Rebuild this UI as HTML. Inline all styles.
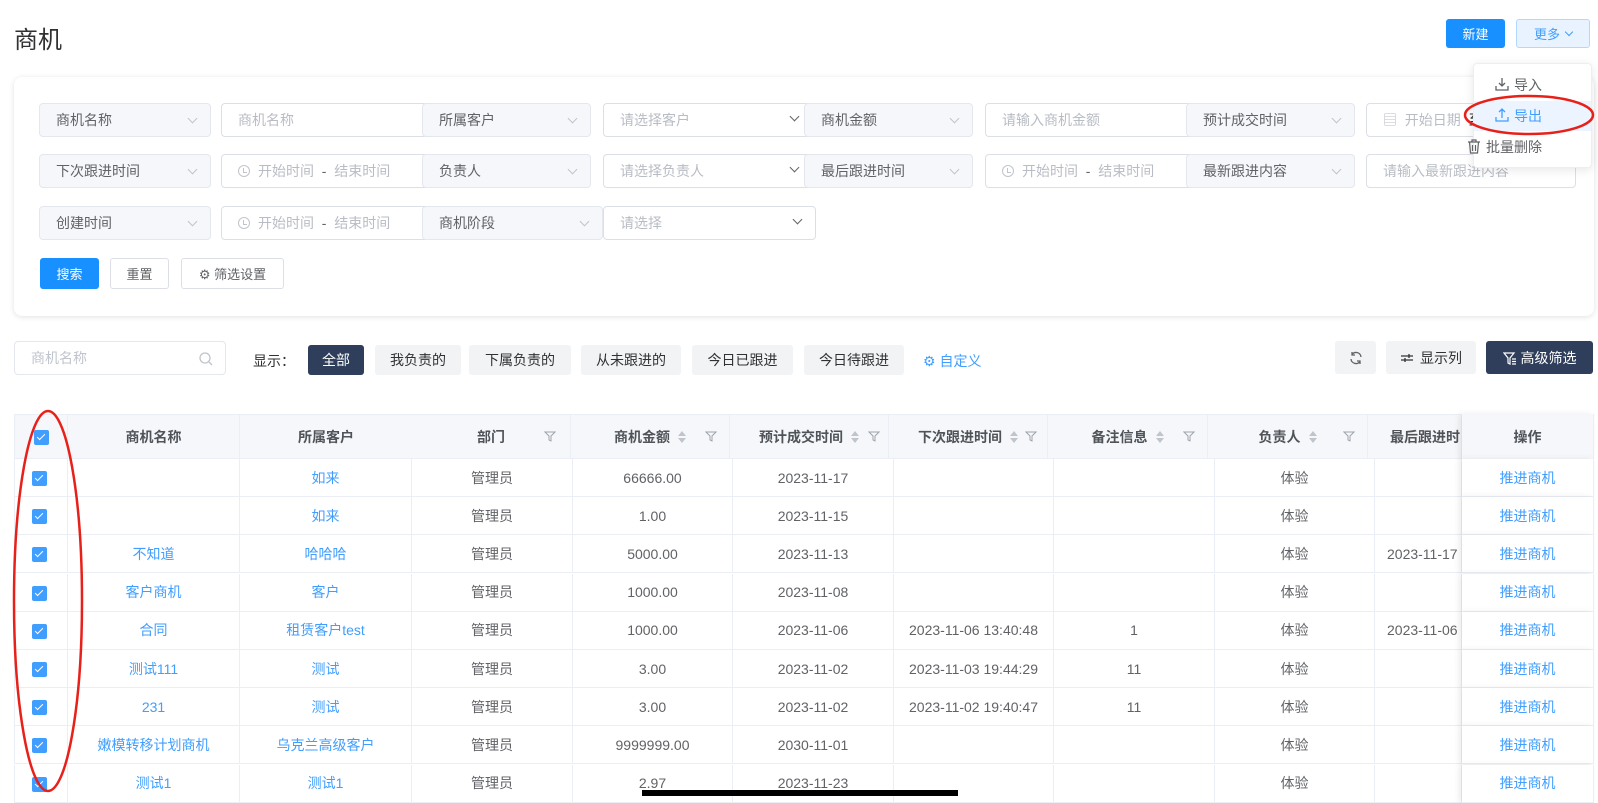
<!DOCTYPE html>
<html><head><meta charset="utf-8"><style>
*{box-sizing:border-box;margin:0;padding:0}
body{width:1598px;height:796px;overflow:hidden;background:#fff;font-family:"Liberation Sans","Noto Sans CJK SC",sans-serif;font-size:14px;color:#303133;position:relative}
.a{position:absolute}
.lbl{position:absolute;background:#f5f7fa;border:1px solid #e4e7ed;border-radius:4px;color:#606266;padding-left:16px;display:flex;align-items:center;height:34px}
.inp{position:absolute;background:#fff;border:1px solid #dcdfe6;border-radius:4px;color:#b8bcc4;padding-left:16px;display:flex;align-items:center;height:34px}
.chev{position:absolute;right:14px;top:11px;width:7px;height:7px;border-right:1px solid #c0c4cc;border-bottom:1px solid #c0c4cc;transform:rotate(45deg)}
.chev.d{border-color:#606266;top:9px}
.btn{position:absolute;display:flex;align-items:center;justify-content:center;border-radius:3px;font-size:13px}
.tab{position:absolute;top:345px;height:30px;background:#f2f3f5;border-radius:3px;display:flex;align-items:center;justify-content:center;color:#303133}
.clk{display:inline-block;width:12px;height:12px;border:1px solid #c0c4cc;border-radius:50%;margin-right:8px;position:relative}
.clk:after{content:"";position:absolute;left:4px;top:2px;width:3px;height:4px;border-left:1px solid #c0c4cc;border-bottom:1px solid #c0c4cc}
.th{position:absolute;top:414px;height:45px;display:flex;align-items:center;justify-content:center;font-weight:bold;color:#505459;font-size:14px;border-right:1px solid #ebeef5}
.td{position:absolute;height:38px;display:flex;align-items:center;justify-content:center;color:#606266;border-right:1px solid #ebeef5;border-bottom:1px solid #ebeef5}
.lk{color:#409eff}
.cb{position:absolute;width:15px;height:15px;background:#409eff;border-radius:2px}
.cb:after{content:"";position:absolute;left:5px;top:2px;width:3px;height:7px;border-right:1.5px solid #fff;border-bottom:1.5px solid #fff;transform:rotate(45deg)}
.sort{display:inline-block;margin-left:8px;width:8px;position:relative;height:14px}
.sort:before{content:"";position:absolute;top:1px;left:0;border:4px solid transparent;border-bottom:5px solid #c0c4cc;border-top:0}
.sort:after{content:"";position:absolute;bottom:1px;left:0;border:4px solid transparent;border-top:5px solid #c0c4cc;border-bottom:0}
.flt{position:absolute;width:12px;height:11px}
</style></head><body>

<div class="a" style="left:14px;top:20px;font-size:24px;color:#303133">商机</div>
<div class="btn" style="left:1446px;top:19px;width:59px;height:29px;background:#1890ff;color:#fff">新建</div>
<div class="btn" style="left:1516px;top:19px;width:74px;height:29px;background:#e8f3ff;border:1px solid #b3d8ff;color:#409eff">更多 <span style="display:inline-block;width:6px;height:6px;border-right:1px solid #409eff;border-bottom:1px solid #409eff;transform:rotate(45deg);margin:-4px 0 0 6px"></span></div>

<div class="a" style="left:14px;top:77px;width:1580px;height:239px;border-radius:8px;box-shadow:0 1px 6px rgba(0,0,0,.12);background:#fff"></div>

<div class="lbl" style="left:39px;top:103px;width:172px">商机名称<i class="chev"></i></div>
<div class="inp" style="left:221px;top:103px;width:210px">商机名称</div>
<div class="lbl" style="left:422px;top:103px;width:169px">所属客户<i class="chev"></i></div>
<div class="inp" style="left:603px;top:103px;width:210px">请选择客户<i class="chev d"></i></div>
<div class="lbl" style="left:804px;top:103px;width:169px">商机金额<i class="chev"></i></div>
<div class="inp" style="left:985px;top:103px;width:210px">请输入商机金额</div>
<div class="lbl" style="left:1186px;top:103px;width:169px">预计成交时间<i class="chev"></i></div>
<div class="inp" style="left:1366px;top:103px;width:210px">▤&nbsp; 开始日期 <span style="color:#303133;margin-left:8px">至</span></div>

<div class="lbl" style="left:39px;top:154px;width:172px">下次跟进时间<i class="chev"></i></div>
<div class="inp" style="left:221px;top:154px;width:210px"><i class="clk"></i>开始时间 &nbsp;<span style="color:#606266">-</span>&nbsp; 结束时间</div>
<div class="lbl" style="left:422px;top:154px;width:169px">负责人<i class="chev"></i></div>
<div class="inp" style="left:603px;top:154px;width:210px">请选择负责人<i class="chev d"></i></div>
<div class="lbl" style="left:804px;top:154px;width:169px">最后跟进时间<i class="chev"></i></div>
<div class="inp" style="left:985px;top:154px;width:210px"><i class="clk"></i>开始时间 &nbsp;<span style="color:#606266">-</span>&nbsp; 结束时间</div>
<div class="lbl" style="left:1186px;top:154px;width:169px">最新跟进内容<i class="chev"></i></div>
<div class="inp" style="left:1366px;top:154px;width:210px;overflow:hidden;white-space:nowrap">请输入最新跟进内容</div>

<div class="lbl" style="left:39px;top:206px;width:172px">创建时间<i class="chev"></i></div>
<div class="inp" style="left:221px;top:206px;width:210px"><i class="clk"></i>开始时间 &nbsp;<span style="color:#606266">-</span>&nbsp; 结束时间</div>
<div class="lbl" style="left:422px;top:206px;width:181px">商机阶段<i class="chev"></i></div>
<div class="inp" style="left:603px;top:206px;width:213px">请选择<i class="chev d"></i></div>

<div class="btn" style="left:40px;top:258px;width:59px;height:31px;background:#1890ff;color:#fff">搜索</div>
<div class="btn" style="left:110px;top:258px;width:59px;height:31px;border:1px solid #dcdfe6;color:#606266">重置</div>
<div class="btn" style="left:181px;top:258px;width:103px;height:31px;border:1px solid #dcdfe6;color:#606266">⚙ 筛选设置</div>

<div class="a" style="left:1473px;top:63px;width:119px;height:105px;background:#fff;border:1px solid #ebeef5;border-radius:4px;box-shadow:0 2px 10px rgba(0,0,0,.1)"></div>
<div class="a" style="left:1474px;top:101px;width:117px;height:30px;background:#ecf5ff"></div>
<svg class="a" style="left:1495px;top:77px" width="14" height="14" viewBox="0 0 14 14"><path d="M7 1v8M4 6l3 3 3-3M1 9v4h12V9" fill="none" stroke="#606266" stroke-width="1.3"/></svg>
<div class="a" style="left:1514px;top:75px;color:#606266">导入</div>
<svg class="a" style="left:1495px;top:108px" width="14" height="14" viewBox="0 0 14 14"><path d="M7 10V1M4 4l3-3 3 3M1 9v4h12V9" fill="none" stroke="#409eff" stroke-width="1.3"/></svg>
<div class="a" style="left:1514px;top:106px;color:#409eff">导出</div>
<svg class="a" style="left:1467px;top:139px" width="14" height="15" viewBox="0 0 14 15"><path d="M1 3h12M5 3V1h4v2M2.5 3l1 11h7l1-11M5.5 6v6M8.5 6v6" fill="none" stroke="#606266" stroke-width="1.2"/></svg>
<div class="a" style="left:1486px;top:137px;color:#606266">批量删除</div>
<svg class="a" style="left:1462px;top:93px" width="134" height="44"><ellipse cx="67" cy="22" rx="64" ry="19" fill="none" stroke="#e8201a" stroke-width="2.5"/></svg>

<div class="inp" style="left:14px;top:341px;width:212px;height:34px;border-color:#e4e7ed;color:#c0c4cc">商机名称<svg style="position:absolute;right:12px;top:10px" width="14" height="14" viewBox="0 0 14 14"><circle cx="6" cy="6" r="5" fill="none" stroke="#c0c4cc" stroke-width="1.3"/><path d="M10 10l3 3" stroke="#c0c4cc" stroke-width="1.3"/></svg></div>
<div class="a" style="left:253px;top:351px;color:#303133">显示：</div>
<div class="tab" style="left:308px;width:56px;background:#2f3e5a;color:#fff">全部</div>
<div class="tab" style="left:375px;width:86px">我负责的</div>
<div class="tab" style="left:469px;width:102px">下属负责的</div>
<div class="tab" style="left:581px;width:100px">从未跟进的</div>
<div class="tab" style="left:692px;width:101px">今日已跟进</div>
<div class="tab" style="left:804px;width:100px">今日待跟进</div>
<div class="a" style="left:923px;top:351px;color:#409eff">⚙ 自定义</div>
<div class="btn" style="left:1335px;top:341px;width:41px;height:33px;background:#f2f3f5"><svg width="14" height="14" viewBox="0 0 14 14"><path d="M12 6A5 5 0 0 0 3 3.5M2 8a5 5 0 0 0 9 2.5M3 1v3h3M11 13v-3H8" fill="none" stroke="#606266" stroke-width="1.3"/></svg></div>
<div class="btn" style="left:1386px;top:341px;width:90px;height:33px;background:#f2f3f5;color:#303133;font-size:14px"><svg width="14" height="12" viewBox="0 0 14 12" style="margin-right:6px"><path d="M1 4h12M1 8h12M9 2v4M5 6v4" stroke="#303133" stroke-width="1.3"/></svg>显示列</div>
<div class="btn" style="left:1486px;top:341px;width:107px;height:33px;background:#2f3e5a;color:#fff;font-size:14px"><svg width="14" height="14" viewBox="0 0 14 14" style="margin-right:4px"><path d="M1 2h10L7 7v6L5 12V7z M9 8h4M9 10.5h4M9 13h4" fill="none" stroke="#fff" stroke-width="1.2"/></svg>高级筛选</div>

<div class="a" style="left:14px;top:414px;width:1580px;height:45px;background:#f5f7fa;border-top:1px solid #ebeef5;border-bottom:1px solid #ebeef5"></div>
<div class="th" style="left:14px;width:54px;border-left:1px solid #ebeef5"></div>
<div class="cb" style="left:34px;top:430px"></div>
<div class="th" style="left:68px;width:172px">商机名称</div>
<div class="th" style="left:240px;width:172px;border-right:none">所属客户</div>
<div class="th" style="left:412px;width:159px">部门<svg class="flt" style="right:14px" viewBox="0 0 12 11"><path d="M1 1h10L7 5v5L5 9V5z" fill="none" stroke="#a0a4ab"/></svg></div>
<div class="th" style="left:571px;width:159px">商机金额<span class="sort"></span><svg class="flt" style="right:12px" viewBox="0 0 12 11"><path d="M1 1h10L7 5v5L5 9V5z" fill="none" stroke="#a0a4ab"/></svg></div>
<div class="th" style="left:730px;width:159px">预计成交时间<span class="sort"></span><svg class="flt" style="right:8px" viewBox="0 0 12 11"><path d="M1 1h10L7 5v5L5 9V5z" fill="none" stroke="#a0a4ab"/></svg></div>
<div class="th" style="left:889px;width:159px">下次跟进时间<span class="sort"></span><svg class="flt" style="right:10px" viewBox="0 0 12 11"><path d="M1 1h10L7 5v5L5 9V5z" fill="none" stroke="#a0a4ab"/></svg></div>
<div class="th" style="left:1048px;width:160px">备注信息<span class="sort"></span><svg class="flt" style="right:12px" viewBox="0 0 12 11"><path d="M1 1h10L7 5v5L5 9V5z" fill="none" stroke="#a0a4ab"/></svg></div>
<div class="th" style="left:1208px;width:160px">负责人<span class="sort"></span><svg class="flt" style="right:12px" viewBox="0 0 12 11"><path d="M1 1h10L7 5v5L5 9V5z" fill="none" stroke="#a0a4ab"/></svg></div>
<div class="th" style="left:1368px;width:94px;justify-content:flex-start;padding-left:22px;overflow:hidden;white-space:nowrap">最后跟进时间</div>
<div class="th" style="left:1462px;width:132px;background:#f5f7fa;box-shadow:-3px 0 6px rgba(0,0,0,.08)">操作</div>

<div id="rows"></div>
<script>
var d=[["","如来","66666.00","2023-11-17","","",""],["","如来","1.00","2023-11-15","","",""],["不知道","哈哈哈","5000.00","2023-11-13","","","2023-11-17"],["客户商机","客户","1000.00","2023-11-08","","",""],["合同","租赁客户test","1000.00","2023-11-06","2023-11-06 13:40:48","1","2023-11-06"],["测试111","测试","3.00","2023-11-02","2023-11-03 19:44:29","11",""],["231","测试","3.00","2023-11-02","2023-11-02 19:40:47","11",""],["嫩模转移计划商机","乌克兰高级客户","9999999.00","2030-11-01","","",""],["测试1","测试1","2.97","2023-11-23","","",""]];
var cols=[14,68,240,412,573,733,894,1054,1215,1375,1462,1594],h="";
d.forEach(function(r,i){var t=459+i*38.2;
var v=["",'<span class="lk">'+r[0]+'</span>','<span class="lk">'+r[1]+'</span>',"管理员",r[2],r[3],r[4],r[5],"体验",r[6],'<span class="lk">推进商机</span>'];
for(var c=0;c<11;c++){var st='left:'+cols[c]+'px;top:'+t+'px;width:'+(cols[c+1]-cols[c])+'px;';
if(c==0)st+='border-left:1px solid #ebeef5;';
if(c==9)st+='justify-content:flex-start;padding-left:12px;overflow:hidden;white-space:nowrap;';
if(c==10)st+='background:#fff;box-shadow:-3px 0 6px rgba(0,0,0,.08);';
h+='<div class="td" style="'+st+'">'+v[c]+'</div>';}
h+='<div class="cb" style="left:32px;top:'+(t+12)+'px"></div>';});
document.getElementById('rows').innerHTML=h;
</script>

<svg class="a" style="left:8px;top:406px" width="80" height="392"><ellipse cx="40" cy="195" rx="34" ry="190" fill="none" stroke="#e8201a" stroke-width="2.5"/></svg>
<div class="a" style="left:642px;top:790px;width:316px;height:6px;background:#000"></div>
</body></html>
